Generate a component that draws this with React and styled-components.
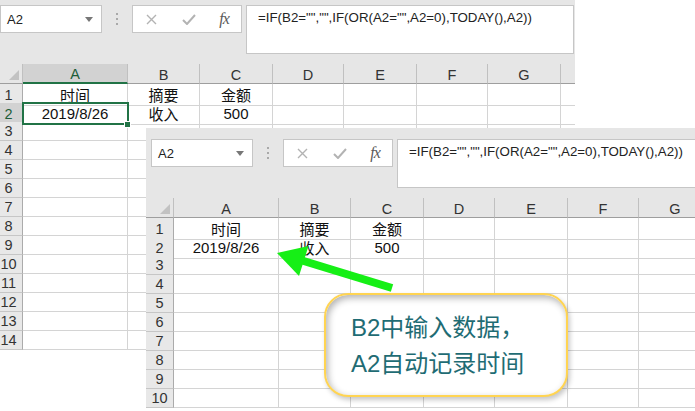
import React from "react";
import styled, { createGlobalStyle, css } from "styled-components";

const GlobalStyle = createGlobalStyle`
  html, body {
    margin: 0;
    padding: 0;
    background: #fff;
  }
  body {
    font-family: "Liberation Sans", "Noto Sans CJK SC", sans-serif;
  }
`;

// last column is a filler that only shows its grid lines
const COLS = ["A", "B", "C", "D", "E", "F", "G", ""];
const WIDTHS = [105, 72, 73, 71, 73, 71, 73, 72];
const TEMPLATE = `28px ${WIDTHS.map((w) => w + "px").join(" ")}`;

const DATA = {
  1: ["时间", "摘要", "金额"],
  2: ["2019/8/26", "收入", "500"],
};

const FORMULA = '=IF(B2="","",IF(OR(A2="",A2=0),TODAY(),A2))';

const Sheet = ({ rows, selected, front }) => {
  const rowList = Array.from({ length: rows }, (_, i) => i + 1);
  return (
    <Window $front={front} $height={front ? 290 : 356}>
      <Toolbar>
        <NameBox>
          <span>A2</span>
          <svg width="8" height="5" viewBox="0 0 8 5">
            <polygon points="0,0 8,0 4,5" fill="#777" />
          </svg>
        </NameBox>
        <Dots>
          <span />
          <span />
          <span />
        </Dots>
        <FxBox>
          <svg width="11" height="11" viewBox="0 0 11 11">
            <path d="M1 1 L10 10 M10 1 L1 10" stroke="#b3b3b3" strokeWidth="1.4" fill="none" />
          </svg>
          <svg width="14" height="11" viewBox="0 0 14 11">
            <path d="M1 6 L5 10 L13 1" stroke="#b3b3b3" strokeWidth="2" fill="none" />
          </svg>
          <FxLabel>fx</FxLabel>
        </FxBox>
        <Formula>{FORMULA}</Formula>
      </Toolbar>

      <HeaderRow>
        <Corner>
          <svg width="10" height="10" viewBox="0 0 10 10">
            <polygon points="10,0 10,10 0,10" fill="#c2c2c2" />
          </svg>
        </Corner>
        {COLS.map((c, i) => (
          <ColHead key={i} $active={selected && c === "A"}>
            {c}
          </ColHead>
        ))}
      </HeaderRow>

      {rowList.map((r) => (
        <Row key={r}>
          <RowHead $active={selected && r === 2}>{r}</RowHead>
          {COLS.map((c, i) => (
            <Cell key={i} $selected={selected && r === 2 && i === 0}>
              {DATA[r] && DATA[r][i]}
            </Cell>
          ))}
        </Row>
      ))}
    </Window>
  );
};

const Arrow = () => (
  <ArrowSvg width="130" height="65" viewBox="0 0 130 65">
    <line x1="32" y1="25.5" x2="122" y2="53" stroke="#16ef16" strokeWidth="8" />
    <polygon points="7,18 38.5,11 29,41" fill="#16ef16" />
  </ArrowSvg>
);

const App = () => {
  return (
    <>
      <GlobalStyle />
      <Stage>
        <Sheet rows={14} selected />
        <Sheet rows={10} front />
        <Arrow />
        <Callout>
          <div>B2中输入数据，</div>
          <div>A2自动记录时间</div>
        </Callout>
      </Stage>
    </>
  );
};

const Stage = styled.div`
  position: relative;
  width: 695px;
  height: 411px;
  overflow: hidden;
  background: #fff;
`;

const Window = styled.div`
  width: 580px;
  height: ${(p) => p.$height}px;
  overflow: hidden;
  background: #fff;
  ${(p) =>
    p.$front
      ? css`
          position: absolute;
          left: 146px;
          top: 128px;
        `
      : css`
          margin: -6px 0 0 -5px;
        `}
`;

const Toolbar = styled.div`
  height: 70px;
  box-sizing: border-box;
  background: #e6e6e6;
  display: flex;
  align-items: flex-start;
  padding: 11px 0 0 5px;
`;

const NameBox = styled.div`
  width: 102px;
  height: 28px;
  box-sizing: border-box;
  background: #fff;
  border: 1px solid #c6c6c6;
  display: flex;
  align-items: center;
  justify-content: space-between;
  padding: 0 8px 0 6px;
  font-size: 13px;
  color: #222;
`;

const Dots = styled.div`
  width: 30px;
  height: 28px;
  display: flex;
  flex-direction: column;
  align-items: center;
  justify-content: center;
  gap: 3px;
  span {
    width: 2px;
    height: 2px;
    background: #a9a9a9;
  }
`;

const FxBox = styled.div`
  width: 110px;
  height: 28px;
  box-sizing: border-box;
  background: #fff;
  border: 1px solid #c6c6c6;
  display: grid;
  grid-template-columns: 37px 37px 34px;
  justify-items: center;
  align-items: center;
`;

const FxLabel = styled.span`
  font-family: "Liberation Serif", serif;
  font-style: italic;
  font-size: 16px;
  color: #5a5a5a;
  letter-spacing: -1px;
`;

const Formula = styled.div`
  flex: 1;
  margin: 0 1px 0 4px;
  height: 49px;
  box-sizing: border-box;
  background: #fff;
  border: 1px solid #c6c6c6;
  padding: 4px 0 0 11px;
  font-size: 13.3px;
  color: #222;
  white-space: nowrap;
`;

const HeaderRow = styled.div`
  display: grid;
  grid-template-columns: ${TEMPLATE};
  height: 20px;
  background: #e6e6e6;
`;

const Corner = styled.div`
  box-sizing: border-box;
  border-right: 1px solid #c0c0c0;
  border-bottom: 1px solid #9e9e9e;
  display: flex;
  align-items: flex-end;
  justify-content: flex-end;
  padding: 0 3px 3px 0;
`;

const ColHead = styled.div`
  box-sizing: border-box;
  border-right: 1px solid #c0c0c0;
  border-bottom: ${(p) => (p.$active ? "2px solid #217346" : "1px solid #9e9e9e")};
  background: ${(p) => (p.$active ? "#d2d2d2" : "#e6e6e6")};
  color: ${(p) => (p.$active ? "#1d5d38" : "#333")};
  display: flex;
  align-items: center;
  justify-content: center;
  padding-top: 2px;
  font-size: 14.5px;
`;

const Row = styled.div`
  display: grid;
  grid-template-columns: ${TEMPLATE};
  height: 19px;
`;

const RowHead = styled.div`
  box-sizing: border-box;
  background: ${(p) => (p.$active ? "#d2d2d2" : "#e8e8e8")};
  color: ${(p) => (p.$active ? "#1d5d38" : "#333")};
  border-right: 1px solid #ababab;
  border-bottom: 1px solid #c6c6c6;
  display: flex;
  align-items: center;
  justify-content: center;
  font-size: 14.5px;
`;

const Cell = styled.div`
  position: relative;
  box-sizing: border-box;
  border-right: 1px solid #d4d4d4;
  border-bottom: 1px solid #d4d4d4;
  display: flex;
  align-items: center;
  justify-content: center;
  font-size: 15px;
  color: #111;
  white-space: nowrap;
  ${(p) =>
    p.$selected &&
    css`
      &::after {
        content: "";
        position: absolute;
        inset: -1px -2px -1px -1px;
        border: 2px solid #217346;
        z-index: 1;
      }
      &::before {
        content: "";
        position: absolute;
        right: -4px;
        bottom: -4px;
        width: 5px;
        height: 5px;
        background: #217346;
        border: 1px solid #fff;
        z-index: 2;
      }
    `}
`;

const ArrowSvg = styled.svg`
  position: absolute;
  left: 270px;
  top: 235px;
`;

const Callout = styled.div`
  position: absolute;
  left: 324px;
  top: 293px;
  width: 244px;
  height: 104px;
  box-sizing: border-box;
  border: 2px solid #ffd452;
  border-radius: 24px;
  background: #fff;
  box-shadow: inset 2px 3px 7px rgba(0, 0, 0, 0.3),
    2px 3px 5px rgba(0, 0, 0, 0.22);
  padding: 15px 0 0 25px;
  font-size: 24px;
  line-height: 36px;
  color: #1f6c74;
  white-space: nowrap;
`;

export default App;
